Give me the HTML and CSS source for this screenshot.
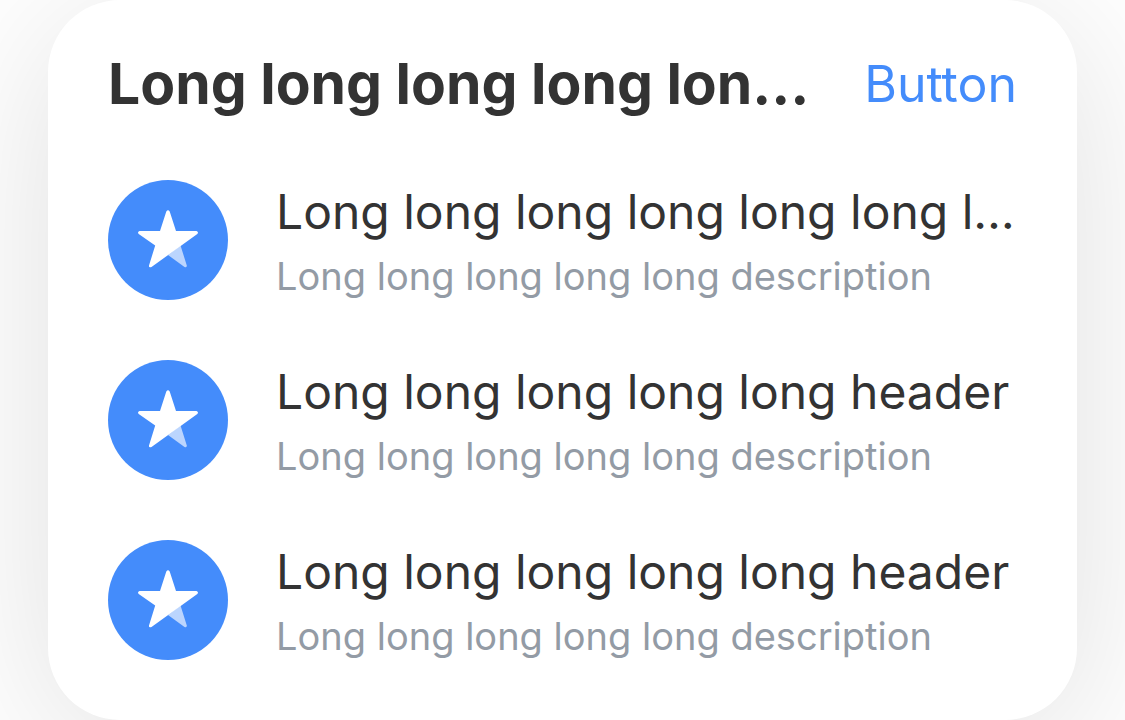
FILE: index.html
```html
<!DOCTYPE html>
<html lang="en">
<head>
<meta charset="utf-8">
<meta name="viewport" content="width=device-width, initial-scale=1">
<title>Card</title>
<link rel="stylesheet" href="styles.css">
</head>
<body>
<svg class="defs" aria-hidden="true">
  <symbol id="star" viewBox="0 0 60 60">
    <path class="star-shade" d="M30 45 42.500 35.500 48.800 55.500Q49 58 46.500 57Z"/>
    <path class="star-main" d="M28.300 1.500Q30-1 31.700 1.500L38 21H58.500Q61 22 59.300 24L13.500 57Q10.500 58 11 55.500L17.200 35.500.7 24Q-1 22 1.500 21H22Z"/>
  </symbol>
</svg>
<main class="card">
  <header class="card-header">
    <h1 class="card-title">Long long long long long title</h1>
    <button class="card-action" type="button">Button</button>
  </header>
  <ul class="list">
    <li class="item">
      <span class="badge"><svg class="icon" aria-hidden="true"><use href="#star"/></svg></span>
      <div class="item-text">
        <h2 class="item-title">Long long long long long long long header</h2>
        <p class="item-desc">Long long long long long description</p>
      </div>
    </li>
    <li class="item">
      <span class="badge"><svg class="icon" aria-hidden="true"><use href="#star"/></svg></span>
      <div class="item-text">
        <h2 class="item-title">Long long long long long header</h2>
        <p class="item-desc">Long long long long long description</p>
      </div>
    </li>
    <li class="item">
      <span class="badge"><svg class="icon" aria-hidden="true"><use href="#star"/></svg></span>
      <div class="item-text">
        <h2 class="item-title">Long long long long long header</h2>
        <p class="item-desc">Long long long long long description</p>
      </div>
    </li>
  </ul>
</main>
</body>
</html>
```
FILE: styles.css
```css
* { box-sizing: border-box; }
body {
  margin: 0;
  padding: 0 48px;
  overflow-x: hidden;
  background: #fff;
  font-family: Inter, "Liberation Sans", sans-serif;
  color: #333;
}
.defs { position: absolute; width: 0; height: 0; }
.card {
  padding: 48px 60px 60px;
  border-radius: 72px;
  background: #fff;
  box-shadow: 0 24px 168px rgba(0, 0, 0, 0.13);
}
.card-header {
  display: flex;
  align-items: center;
  gap: 48px;
  margin-bottom: 60px;
}
.card-title {
  flex: 1;
  min-width: 0;
  margin: 0;
  overflow: hidden;
  font-size: 57px;
  font-weight: 700;
  line-height: 72px;
  white-space: nowrap;
  text-overflow: ellipsis;
}
.card-action {
  padding: 0;
  border: 0;
  background: none;
  color: #448cfb;
  font: inherit;
  font-size: 50px;
  line-height: 72px;
}
.list {
  display: grid;
  grid-template-columns: minmax(0, 1fr);
  gap: 60px;
  margin: 0;
  padding: 0;
  list-style: none;
}
.item { display: flex; gap: 48px; }
.badge {
  display: flex;
  flex: none;
  align-items: center;
  justify-content: center;
  width: 120px;
  height: 120px;
  border-radius: 50%;
  background: #448cfb;
}
.icon { width: 60px; height: 60px; }
.star-main { fill: #fff; }
.star-shade { fill: #fff; opacity: 0.64; }
.item-text {
  display: grid;
  flex: 1;
  gap: 8px;
  min-width: 0;
}
.item-title,
.item-desc {
  min-width: 0;
  margin: 0;
  overflow: hidden;
  font-weight: 400;
  white-space: nowrap;
  text-overflow: ellipsis;
}
.item-title { font-size: 48px; line-height: 64px; }
.item-desc { font-size: 38px; line-height: 48px; color: #939ba5; }
```
